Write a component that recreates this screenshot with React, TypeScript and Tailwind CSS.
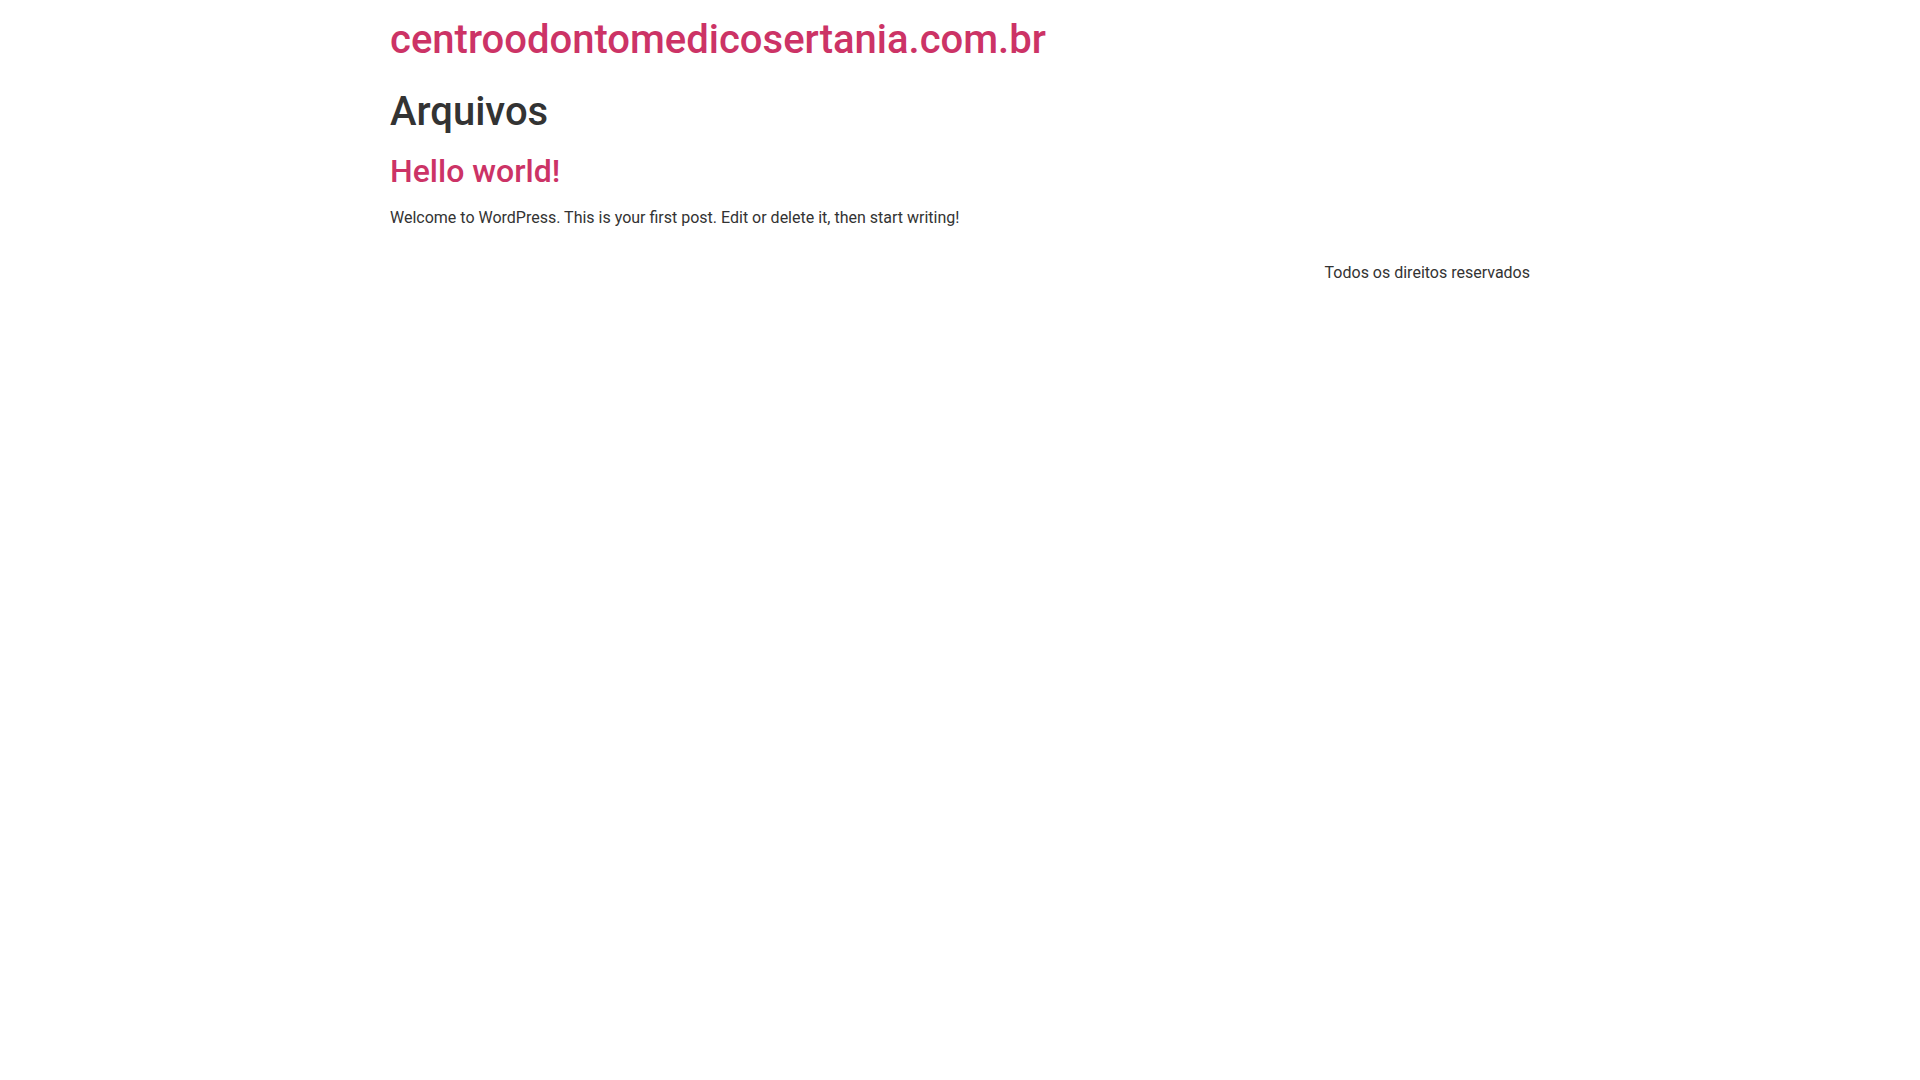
import React from "react";

const App = () => {
  return (
    <div className="min-h-screen bg-white text-[#333] font-['Roboto',sans-serif] text-base leading-normal antialiased">
      <header className="max-w-[1140px] mx-auto pt-4">
        <h1 className="text-[40px] leading-[1.2] font-medium">
          <a href="#" className="text-[#c36]">
            centroodontomedicosertania.com.br
          </a>
        </h1>
      </header>

      <main className="max-w-[1140px] mx-auto">
        <h1 className="mt-6 text-[40px] leading-[1.2] font-medium">Arquivos</h1>
        <article className="mt-4">
          <h2 className="text-[32px] leading-[1.2] font-medium">
            <a href="#" className="text-[#c36]">
              Hello world!
            </a>
          </h2>
          <p className="mt-4">
            Welcome to WordPress. This is your first post. Edit or delete it, then start writing!
          </p>
        </article>
      </main>

      <footer className="max-w-[1140px] mx-auto pt-[31px] flex justify-end">
        <p>Todos os direitos reservados</p>
      </footer>
    </div>
  );
};

export default App;
